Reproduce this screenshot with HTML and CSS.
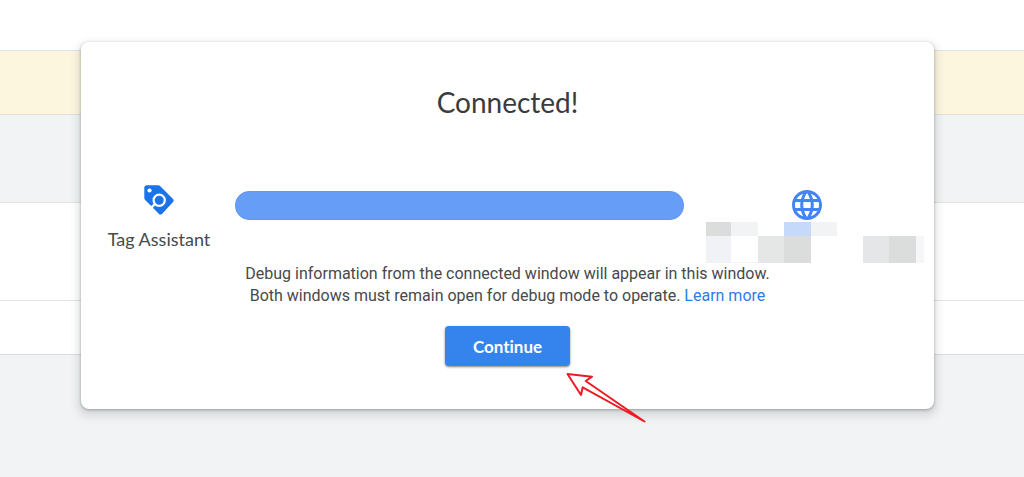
FILE: index.html
```html
<!DOCTYPE html>
<html lang="en">

<head>
    <meta charset="utf-8">
    <title>Tag Assistant</title>
    <link rel="stylesheet" href="styles.css">
</head>

<body>
    <div class="page">
        <div class="toolbar"></div>
        <div class="notice"></div>
        <div class="banner"></div>
        <div class="panel"></div>
        <div class="panel-footer"></div>
    </div>

    <div class="overlay">
        <div class="dialog" role="dialog" aria-labelledby="title">
            <h1 class="title" id="title">Connected!</h1>

            <div class="connection">
                <div class="endpoint">
                    <svg class="tag-icon" viewBox="0 0 30 30">
                        <path fill="#1a73e8" d="M3 0.3H14.2Q15.4 0.3 16.3 1.2L29 13.9Q30.4 15.4 29 16.9L18 28.9Q16.5 30.3 15 28.9L1.2 15.1Q0.3 14.2 0.3 13V3Q0.3 0.3 3 0.3Z" />
                        <circle cx="5.5" cy="5.5" r="2.1" fill="#fff" />
                        <path d="M11 19L6.8 23.2" stroke="#fff" stroke-width="2.4" />
                        <circle cx="15.2" cy="15.2" r="5.6" fill="#1a73e8" stroke="#fff" stroke-width="2.2" />
                    </svg>
                    <div class="endpoint-name">Tag Assistant</div>
                </div>

                <div class="link-bar"></div>

                <div class="endpoint site">
                    <svg class="globe-icon" viewBox="2 2 20 20">
                        <path fill="#4285f4" d="M11.99 2C6.47 2 2 6.48 2 12s4.47 10 9.99 10C17.52 22 22 17.52 22 12S17.52 2 11.99 2zm6.93 6h-2.95c-.32-1.25-.78-2.45-1.38-3.56 1.84.63 3.37 1.91 4.33 3.56zM12 4.04c.83 1.2 1.48 2.53 1.91 3.96h-3.82c.43-1.43 1.08-2.76 1.91-3.96zM4.26 14C4.1 13.36 4 12.69 4 12s.1-1.36.26-2h3.38c-.08.66-.14 1.32-.14 2s.06 1.34.14 2H4.26zm.82 2h2.95c.32 1.25.78 2.45 1.38 3.56-1.84-.63-3.37-1.9-4.33-3.56zm2.95-8H5.08c.96-1.66 2.49-2.93 4.33-3.56C8.81 5.55 8.35 6.75 8.03 8zM12 19.96c-.83-1.2-1.48-2.53-1.91-3.96h3.82c-.43 1.43-1.08 2.76-1.91 3.96zM14.34 14H9.66c-.09-.66-.16-1.32-.16-2s.07-1.35.16-2h4.68c.09.65.16 1.32.16 2s-.07 1.34-.16 2zm.25 5.56c.6-1.11 1.06-2.31 1.38-3.56h2.95c-.96 1.65-2.49 2.93-4.33 3.56zM16.36 14c.08-.66.14-1.32.14-2s-.06-1.34-.14-2h3.38c.16.64.26 1.31.26 2s-.1 1.36-.26 2h-3.38z" />
                    </svg>
                    <!-- redacted site address -->
                    <svg class="redacted" viewBox="0 0 218 41">
                        <rect width="25" height="14" fill="#dbdddc" />
                        <rect x="25" width="27" height="14" fill="#f2f3f5" />
                        <rect x="78" width="27" height="14" fill="#c5d9fb" />
                        <rect x="105" width="26" height="14" fill="#f2f3f5" />
                        <rect y="14" width="25" height="27" fill="#f0f2f5" />
                        <rect x="25" y="40" width="27" height="1" fill="#f2f3f5" />
                        <rect x="52" y="14" width="26" height="27" fill="#e5e6e6" />
                        <rect x="78" y="14" width="27" height="27" fill="#dbdddc" />
                        <rect x="157" y="14" width="26" height="27" fill="#e4e6e8" />
                        <rect x="183" y="14" width="27" height="27" fill="#dbdddc" />
                        <rect x="210" y="14" width="8" height="27" fill="#f6f6f8" />
                    </svg>
                </div>
            </div>

            <p class="message">
                Debug information from the connected window will appear in this window.<br>
                Both windows must remain open for debug mode to operate. <a href="#">Learn more</a>
            </p>

            <div class="actions">
                <button class="continue-btn" type="button">Continue</button>
                <svg class="arrow" viewBox="0 0 84 54">
                    <path d="M2.5 2L27 4.7L20.7 9L79.5 49.5L17.7 15.3L16 23Z" />
                </svg>
            </div>
        </div>
    </div>
</body>

</html>
```
FILE: styles.css
```css
* {
    margin: 0;
    padding: 0;
    box-sizing: border-box;
}

body {
    min-height: 100vh;
    font-family: Roboto, sans-serif;
    background: #f1f3f4;
    color: #47494c;
    position: relative;
}

/* Page behind the dialog */
.toolbar {
    height: 51px;
    background: #ffffff;
    border-bottom: 1px solid #e0e2e4;
}

.notice {
    height: 63px;
    background: #fdf6df;
}

.banner {
    height: 89px;
    border-top: 1px solid #dfe1e3;
    border-bottom: 1px solid #dfe1e3;
}

.panel {
    height: 98px;
    background: #ffffff;
    border-bottom: 1px solid #e0e2e4;
}

.panel-footer {
    height: 54px;
    background: #ffffff;
    border-bottom: 1px solid #dadce0;
}

/* Dialog */
.overlay {
    position: absolute;
    inset: 0;
    padding: 42px 90px 0 81px;
}

.dialog {
    padding: 43px 0;
    background: #ffffff;
    border-radius: 8px;
    box-shadow: 0 1px 3px rgba(60, 64, 67, 0.4), 0 4px 8px 3px rgba(60, 64, 67, 0.15);
}

.title {
    font-family: Lato, sans-serif;
    font-size: 28px;
    font-weight: 400;
    line-height: 34px;
    text-align: center;
    color: #3a3b3d;
}

.connection {
    display: flex;
    margin-top: 66px;
}

.endpoint {
    display: flex;
    flex-direction: column;
    align-items: center;
    width: 154px;
    padding-left: 2px;
}

.tag-icon {
    width: 30px;
    height: 30px;
}

.endpoint-name {
    margin-top: 14px;
    font-family: Lato, sans-serif;
    font-size: 18px;
    line-height: 20px;
}

.link-bar {
    flex: 1;
    height: 29px;
    margin-top: 6px;
    background: #669df6;
    border: 1px solid #5f97f5;
    border-radius: 14px;
}

.site {
    width: 250px;
    padding: 5px 26px 0 22px;
}

.globe-icon {
    width: 30px;
    height: 30px;
}

.redacted {
    align-self: flex-start;
    flex-shrink: 0;
    width: 218px;
    height: 41px;
    margin-top: 2px;
}

.message {
    font-size: 16px;
    line-height: 22px;
    text-align: center;
}

.message a {
    color: #2b7cec;
    text-decoration: none;
}

.actions {
    position: relative;
    width: 125px;
    margin: 19px auto 0;
}

.continue-btn {
    display: block;
    width: 100%;
    height: 40px;
    border: none;
    border-radius: 4px;
    background: #3583ec;
    box-shadow: 0 1px 2px rgba(60, 64, 67, 0.5), 0 1px 3px rgba(60, 64, 67, 0.2);
    color: #ffffff;
    font-family: Lato, sans-serif;
    font-size: 17px;
    font-weight: 700;
    font-variant-ligatures: none;
    cursor: pointer;
}

.continue-btn:hover {
    background: #1a73e8;
}

/* Pointer drawn over the dialog's lower edge */
.arrow {
    position: absolute;
    top: 46px;
    left: 120px;
    width: 84px;
    height: 54px;
    fill: none;
    stroke: #ed1c24;
    stroke-width: 2;
    stroke-linejoin: round;
    pointer-events: none;
}
```
